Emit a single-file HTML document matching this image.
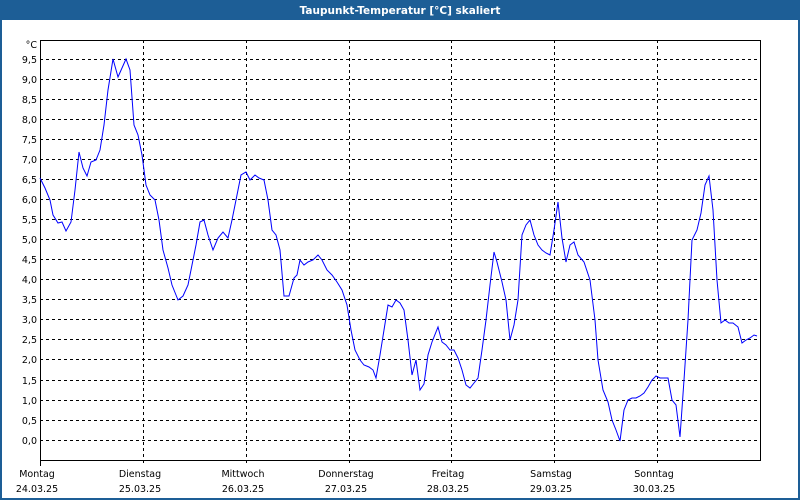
<!DOCTYPE html><html><head><style>
body{margin:0;width:800px;height:500px;overflow:hidden;background:#fff;font-family:"DejaVu Sans","Liberation Sans",sans-serif}
</style></head><body>
<svg width="800" height="500" xmlns="http://www.w3.org/2000/svg" style="position:absolute;left:0;top:0">
<rect x="0" y="0" width="800" height="500" fill="#1d5e96"/>
<rect x="2" y="20" width="796" height="478" fill="#fff"/>
<text x="400" y="14" fill="#fff" font-size="10.5" font-weight="bold" text-anchor="middle" font-family="DejaVu Sans,sans-serif">Taupunkt-Temperatur [°C] skaliert</text>
<g stroke="#000" stroke-dasharray="3,3" stroke-width="1">
<path d="M40 59.5H760M40 79.5H760M40 99.5H760M40 119.5H760M40 139.5H760M40 159.5H760M40 179.5H760M40 199.5H760M40 219.5H760M40 239.5H760M40 259.5H760M40 279.5H760M40 299.5H760M40 319.5H760M40 339.5H760M40 359.5H760M40 380.5H760M40 400.5H760M40 420.5H760M40 440.5H760"/>
<path d="M143.5 40V466M246.5 40V466M349.5 40V466M451.5 40V466M554.5 40V466M657.5 40V466"/>
</g>
<rect x="40.5" y="40.5" width="720" height="420" fill="none" stroke="#000"/>
<path d="M40.5 461v5" stroke="#000"/>
<g font-size="9.5" fill="#000" text-anchor="end">
<text x="37" y="48">°C</text>
<text x="37" y="63">9,5</text><text x="37" y="83">9,0</text><text x="37" y="103">8,5</text><text x="37" y="123">8,0</text><text x="37" y="143">7,5</text><text x="37" y="163">7,0</text><text x="37" y="183">6,5</text><text x="37" y="203">6,0</text><text x="37" y="223">5,5</text><text x="37" y="243">5,0</text><text x="37" y="263">4,5</text><text x="37" y="283">4,0</text><text x="37" y="303">3,5</text><text x="37" y="323">3,0</text><text x="37" y="343">2,5</text><text x="37" y="363">2,0</text><text x="37" y="384">1,5</text><text x="37" y="404">1,0</text><text x="37" y="424">0,5</text><text x="37" y="444">0,0</text>
</g>
<g font-size="9.5" fill="#000" text-anchor="middle">
<text x="37" y="477">Montag</text><text x="37" y="492">24.03.25</text>
<text x="140" y="477">Dienstag</text><text x="140" y="492">25.03.25</text>
<text x="243" y="477">Mittwoch</text><text x="243" y="492">26.03.25</text>
<text x="346" y="477">Donnerstag</text><text x="346" y="492">27.03.25</text>
<text x="448" y="477">Freitag</text><text x="448" y="492">28.03.25</text>
<text x="551" y="477">Samstag</text><text x="551" y="492">29.03.25</text>
<text x="654" y="477">Sonntag</text><text x="654" y="492">30.03.25</text>
</g>
<polyline fill="none" stroke="#0000ff" stroke-width="1" points="40,178 45,188 50,200 53,215 58,223 62,222 66,231 71,222 75,190 79,152 83,168 87,176 91,162 96,160 100,150 104,125 108,90 113,59 118,77 122,68 126,59 130,70 134,125 138,135 142,155 146,185 150,195 155,200 159,220 163,250 168,268 172,285 178,300 183,296 188,285 192,265 196,245 200,222 204,220 208,235 213,250 218,238 223,232 228,238 232,220 237,195 241,175 246,172 250,180 255,175 259,178 264,180 268,200 272,230 276,235 280,250 284,296 289,296 294,278 297,275 300,260 304,265 308,262 313,260 318,255 322,260 327,270 332,275 337,282 342,290 347,305 351,330 355,350 360,360 364,365 369,367 373,370 376,378 380,355 384,330 388,305 392,307 396,300 400,303 404,310 408,340 412,375 416,360 420,390 424,384 428,355 432,342 438,327 442,342 446,345 450,350 454,350 458,358 462,370 466,385 470,388 474,383 478,378 482,350 486,320 490,285 494,252 497,262 502,282 506,300 510,340 514,325 518,300 522,235 526,225 530,220 534,235 538,245 542,250 546,253 550,255 554,230 558,202 562,238 566,262 570,245 574,242 578,255 584,262 590,280 595,320 598,360 603,390 608,402 612,420 616,430 620,441 624,410 628,400 632,398 636,398 640,396 644,393 648,387 652,380 656,376 660,378 664,378 668,378 672,400 676,405 680,437 684,380 688,320 692,240 697,230 701,213 705,185 709,176 713,210 717,280 721,323 725,320 729,323 733,323 738,327 742,343 746,340 750,338 754,335 757,336"/>
</svg>
</body></html>
